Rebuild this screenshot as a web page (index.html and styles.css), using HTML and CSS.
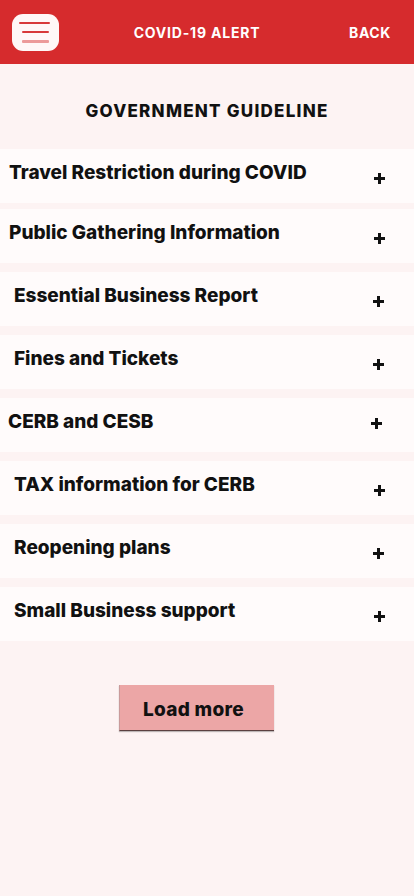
FILE: index.html
```html
<!DOCTYPE html>
<html lang="en">
<head>
<meta charset="utf-8">
<title>COVID-19 Alert</title>
<link rel="stylesheet" href="styles.css">
</head>
<body>
<header class="topbar">
  <button class="menu-btn" aria-label="Menu">
    <span class="line l1"></span>
    <span class="line l2"></span>
    <span class="line l3"></span>
  </button>
  <div class="title">COVID-19 ALERT</div>
  <div class="back">BACK</div>
</header>
<main class="content">
  <h1 class="heading">GOVERNMENT GUIDELINE</h1>
  <ul class="list">
    <li class="row r1"><span class="label pad-a">Travel Restriction during COVID</span><span class="plus"></span></li>
    <li class="row r2"><span class="label pad-a">Public Gathering Information</span><span class="plus"></span></li>
    <li class="row r3"><span class="label pad-b">Essential Business Report</span><span class="plus"></span></li>
    <li class="row r4"><span class="label pad-b">Fines and Tickets</span><span class="plus"></span></li>
    <li class="row r5"><span class="label pad-c">CERB and CESB</span><span class="plus"></span></li>
    <li class="row r6"><span class="label pad-b">TAX information for CERB</span><span class="plus"></span></li>
    <li class="row r7"><span class="label pad-b">Reopening plans</span><span class="plus"></span></li>
    <li class="row r8"><span class="label pad-b">Small Business support</span><span class="plus"></span></li>
  </ul>
  <div class="more-wrap"><button class="more">Load more</button></div>
</main>
</body>
</html>
```
FILE: styles.css
```css
* { box-sizing: border-box; }
html, body { margin: 0; padding: 0; }
body {
  background: #fdf3f3;
  font-family: "Inter", "Liberation Sans", sans-serif;
  color: #111;
  width: 414px;
  min-height: 896px;
}
.topbar {
  height: 64px;
  background: #d62b2d;
  display: flex;
  align-items: center;
  padding: 0 23px 0 12px;
}
.menu-btn {
  width: 47px;
  height: 37px;
  border: none;
  border-radius: 11px;
  background: #fff7f7;
  display: flex;
  flex-direction: column;
  align-items: center;
  justify-content: center;
  gap: 7px;
  padding: 0;
}
.line { display: block; height: 2px; border-radius: 1px; }
.l1 { width: 31px; background: #d8393a; margin-left: 7px; align-self: flex-start; }
.l2 { width: 27px; background: #d8393a; }
.l3 { width: 27px; background: #ec9a9a; height: 3px; }
.title {
  flex: 1;
  text-align: center;
  color: #fff;
  font-weight: 700;
  font-size: 14px;
  letter-spacing: 0.8px;
  padding-right: 14px;
}
.back {
  color: #fff;
  font-weight: 700;
  font-size: 14px;
  letter-spacing: 0.6px;
}
.content { padding-top: 36px; }
.heading {
  margin: 0 0 27px;
  text-align: center;
  font-size: 17px;
  font-weight: 800;
  letter-spacing: 1.25px;
  line-height: 22px;
}
.list {
  list-style: none;
  margin: 0;
  padding: 0;
  display: flex;
  flex-direction: column;
  gap: 9px;
}
.row {
  height: 54px;
  background: #fffbfb;
  display: flex;
  align-items: center;
  justify-content: space-between;
  padding-right: 29px;
}
.r2 { margin-top: -3px; }
.label {
  font-size: 19px;
  font-weight: 800;
  letter-spacing: 0;
  margin-top: -7px;
}
.pad-a { padding-left: 9px; }
.pad-b { padding-left: 14px; }
.pad-c { padding-left: 8px; }
.plus {
  position: relative;
  width: 11px;
  height: 11px;
  margin-top: 4px;
}
.plus::before, .plus::after {
  content: "";
  position: absolute;
  background: #111;
}
.plus::before { left: 0; top: 4px; width: 11px; height: 3px; }
.plus::after { left: 4px; top: 0; width: 3px; height: 11px; }
.r5 .plus { margin-top: -4px; margin-right: 3px; }
.r3 .plus, .r7 .plus, .r4 .plus { margin-right: 1px; }
.more-wrap {
  display: flex;
  justify-content: center;
  padding-top: 44px;
  padding-right: 22px;
}
.more {
  width: 155px;
  height: 46px;
  background: #eca6a6;
  border: none;
  border-left: 1px solid #c99a9a;
  border-bottom: 1px solid #5a4040;
  box-shadow: 0 1px 1px rgba(0,0,0,0.25);
  font-family: inherit;
  font-size: 19px;
  font-weight: 800;
  letter-spacing: 0.3px;
  color: #111;
  padding: 3px 6px 0 0;
}
```
